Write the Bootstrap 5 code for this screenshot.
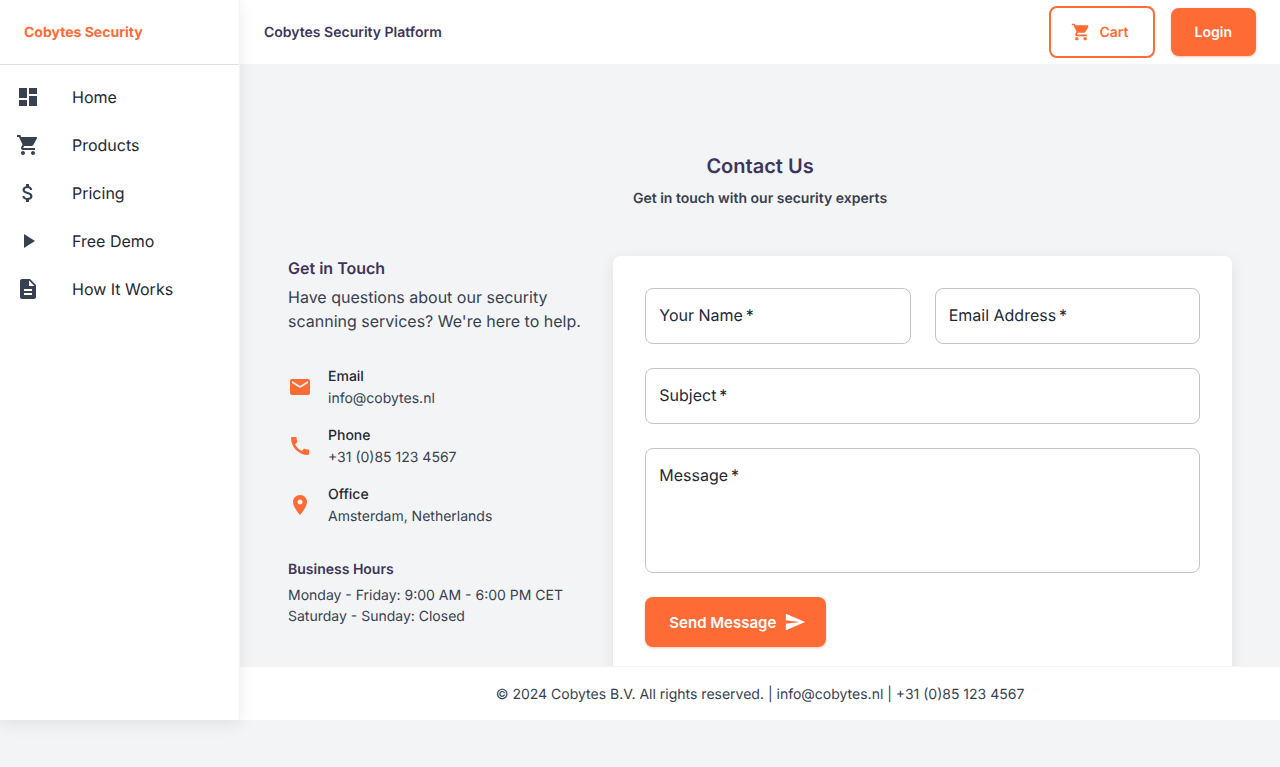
<!DOCTYPE html>
<html lang="en">
<head>
<meta charset="utf-8">
<meta name="viewport" content="width=device-width, initial-scale=1">
<title>Cobytes Security Platform</title>
<link href="https://cdn.jsdelivr.net/npm/bootstrap@5.3.0/dist/css/bootstrap.min.css" rel="stylesheet">
<style>
  :root { --brand: #ff6b35; --ink: #1f2937; --slate: #374151; --plum: #3d355c; }
  body { font-family: Inter, "Liberation Sans", sans-serif; background: #f3f4f6; color: var(--ink); text-rendering: geometricPrecision; min-height: 100vh; }
  .shell { height: 720px; }
  .sidebar { width: 240px; height: 720px; border-right: 1px solid #f3f4f6; box-shadow: 0 4px 16px rgba(0,0,0,.08); z-index: 2; }
  .brand { height: 65px; border-bottom: 1px solid #e0e0e0; color: var(--brand); font-size: 14px; font-weight: 700; padding-top: 1px; }
  .side-nav .nav-link { height: 48px; color: var(--ink); gap: 32px; }
  .side-nav svg { color: var(--slate); }
  svg { fill: currentColor; flex: none; display: block; }
  .icon-start { margin: 0 0 2px -4px; }
  .icon-end { margin: 0 -4px 2px 0; }
  .topbar { height: 64px; }
  .topbar-title { font-size: 14px; font-weight: 600; line-height: 22px; padding-top: 2px; color: var(--plum); }
  .btn-brand, .btn-ghost { font-size: 14px; font-weight: 600; line-height: 1.75; padding: 13px 24px 11px; border-radius: 8px; }
  .btn-brand { background: var(--brand); color: #fff; border: 0; box-shadow: 0 1px 3px rgba(255,107,53,.3), 0 1px 2px rgba(0,0,0,.06); }
  .btn-ghost { color: var(--brand); border: 2px solid var(--brand); }
  .btn-send { font-size: 15px; }
  .page-main { min-height: 0; padding: 88px 48px 0; }
  .page-title { font-size: 20px; font-weight: 600; line-height: 28px; color: var(--plum); }
  .page-sub { font-size: 14px; font-weight: 600; line-height: 22px; color: var(--slate); margin: 8px 0 46px; }
  .contact-row { --bs-gutter-x: 32px; }
  .section-title { font-size: 16px; font-weight: 600; line-height: 24px; color: var(--plum); margin-bottom: 5px; }
  .intro { color: var(--slate); margin-bottom: 32px; }
  .contact-list { font-size: 14px; line-height: 21.5px; margin-bottom: 33px; }
  .contact-list svg { color: var(--brand); }
  .contact-text { margin: 1px 0 -1px; }
  .contact-list .value, .hours { color: var(--slate); }
  .hours { font-size: 14px; line-height: 21px; }
  .hours-title { font-size: 14px; font-weight: 600; line-height: 21px; color: var(--plum); margin-bottom: 5px; }
  .form-card { border-radius: 8px; padding: 32px; height: 460px; box-shadow: 0 4px 16px rgba(0,0,0,.08); }
  .field .form-control { height: 56px; border: 1px solid #c4c4c4; border-radius: 8px; resize: none; }
  .field textarea.form-control { height: 125px; display: block; }
  .field label { top: 16px; left: 14px; line-height: 23px; }
  .page-foot { height: 54px; border-top: 1px solid #f3f4f6; padding-top: 2px; font-size: 14px; color: var(--slate); }
</style>
</head>
<body>
<div class="shell d-flex">
  <aside class="sidebar bg-white position-relative flex-shrink-0">
    <div class="brand d-flex align-items-center px-4">Cobytes Security</div>
    <nav class="side-nav nav flex-column py-2">
      <a class="nav-link d-flex align-items-center px-3 py-0" href="#"><svg width="24" height="24" viewBox="0 0 24 24"><path d="M3 13h8V3H3v10zm0 8h8v-6H3v6zm10 0h8V11h-8v10zm0-18v6h8V3h-8z"/></svg>Home</a>
      <a class="nav-link d-flex align-items-center px-3 py-0" href="#"><svg width="24" height="24" viewBox="0 0 24 24"><path d="M7 18c-1.100 0-1.990.9-1.990 2S5.900 22 7 22s2-.9 2-2-.9-2-2-2zM1 2v2h2l3.600 7.590-1.350 2.450c-.16.28-.25.61-.25.96 0 1.100.9 2 2 2h12v-2H7.420c-.14 0-.25-.11-.25-.25l.03-.12.9-1.630h7.450c.75 0 1.410-.41 1.750-1.030l3.580-6.490c.08-.14.12-.31.12-.48 0-.55-.45-1-1-1H5.210l-.94-2H1zm16 16c-1.100 0-1.990.9-1.990 2s.89 2 1.990 2 2-.9 2-2-.9-2-2-2z"/></svg>Products</a>
      <a class="nav-link d-flex align-items-center px-3 py-0" href="#"><svg width="24" height="24" viewBox="0 0 24 24"><path d="M11.800 10.900c-2.270-.59-3-1.200-3-2.150 0-1.090 1.010-1.850 2.700-1.850 1.780 0 2.440.85 2.500 2.100h2.210c-.07-1.720-1.120-3.300-3.210-3.810V3h-3v2.160c-1.940.42-3.500 1.680-3.500 3.610 0 2.310 1.910 3.460 4.700 4.130 2.500.6 3 1.480 3 2.410 0 .69-.49 1.790-2.700 1.790-2.060 0-2.870-.92-2.980-2.100h-2.200c.12 2.190 1.760 3.420 3.680 3.830V21h3v-2.150c1.950-.37 3.500-1.500 3.500-3.550 0-2.840-2.430-3.810-4.700-4.400z"/></svg>Pricing</a>
      <a class="nav-link d-flex align-items-center px-3 py-0" href="#"><svg width="24" height="24" viewBox="0 0 24 24"><path d="M8 5v14l11-7z"/></svg>Free Demo</a>
      <a class="nav-link d-flex align-items-center px-3 py-0" href="#"><svg width="24" height="24" viewBox="0 0 24 24"><path d="M14 2H6c-1.100 0-1.990.9-1.990 2L4 20c0 1.100.89 2 1.990 2H18c1.100 0 2-.9 2-2V8l-6-6zm2 16H8v-2h8v2zm0-4H8v-2h8v2zm-3-5V3.500L18.500 9H13z"/></svg>How It Works</a>
    </nav>
  </aside>

  <div class="d-flex flex-column flex-grow-1">
    <header class="topbar bg-white d-flex align-items-center justify-content-between px-4 flex-shrink-0">
      <div class="topbar-title">Cobytes Security Platform</div>
      <div class="d-flex align-items-center gap-3">
        <a class="btn btn-ghost d-flex align-items-center gap-2" href="#"><svg class="icon-start" width="20" height="20" viewBox="0 0 24 24"><path d="M7 18c-1.100 0-1.990.9-1.990 2S5.900 22 7 22s2-.9 2-2-.9-2-2-2zM1 2v2h2l3.600 7.590-1.350 2.450c-.16.28-.25.61-.25.96 0 1.100.9 2 2 2h12v-2H7.420c-.14 0-.25-.11-.25-.25l.03-.12.9-1.630h7.450c.75 0 1.410-.41 1.750-1.030l3.580-6.490c.08-.14.12-.31.12-.48 0-.55-.45-1-1-1H5.210l-.94-2H1zm16 16c-1.100 0-1.990.9-1.990 2s.89 2 1.990 2 2-.9 2-2-.9-2-2-2z"/></svg>Cart</a>
        <a class="btn btn-brand" href="#">Login</a>
      </div>
    </header>

    <main class="page-main flex-grow-1 overflow-hidden">
      <div class="text-center">
        <h1 class="page-title mb-0">Contact Us</h1>
        <p class="page-sub">Get in touch with our security experts</p>
      </div>
      <div class="row contact-row">
        <section class="col-4">
          <h2 class="section-title">Get in Touch</h2>
          <p class="intro">Have questions about our security scanning services? We're here to help.</p>
          <div class="contact-list d-flex flex-column gap-3">
            <div class="d-flex align-items-center gap-3">
              <svg width="24" height="24" viewBox="0 0 24 24"><path d="M20 4H4c-1.100 0-1.990.9-1.990 2L2 18c0 1.100.9 2 2 2h16c1.100 0 2-.9 2-2V6c0-1.100-.9-2-2-2zm0 4-8 5-8-5V6l8 5 8-5v2z"/></svg>
              <div class="contact-text"><div class="fw-medium">Email</div><div class="value">info@cobytes.nl</div></div>
            </div>
            <div class="d-flex align-items-center gap-3">
              <svg width="24" height="24" viewBox="0 0 24 24"><path d="M20.010 15.380c-1.230 0-2.420-.2-3.530-.56-.35-.12-.74-.03-1.010.24l-1.570 1.970c-2.830-1.350-5.480-3.900-6.890-6.830l1.950-1.660c.27-.28.35-.67.24-1.020-.37-1.110-.56-2.300-.56-3.530 0-.54-.45-.99-.99-.99H4.190C3.650 3 3 3.240 3 3.990 3 13.280 10.730 21 20.010 21c.71 0 .99-.63.99-1.180v-3.450c0-.54-.45-.99-.99-.99z"/></svg>
              <div class="contact-text"><div class="fw-medium">Phone</div><div class="value">+31 (0)85 123 4567</div></div>
            </div>
            <div class="d-flex align-items-center gap-3">
              <svg width="24" height="24" viewBox="0 0 24 24"><path d="M12 2C8.130 2 5 5.130 5 9c0 5.250 7 13 7 13s7-7.750 7-13c0-3.870-3.130-7-7-7zm0 9.500c-1.380 0-2.500-1.120-2.500-2.500s1.120-2.500 2.500-2.500 2.500 1.120 2.500 2.500-1.120 2.500-2.500 2.500z"/></svg>
              <div class="contact-text"><div class="fw-medium">Office</div><div class="value">Amsterdam, Netherlands</div></div>
            </div>
          </div>
          <h3 class="hours-title">Business Hours</h3>
          <p class="hours mb-0">Monday - Friday: 9:00 AM - 6:00 PM CET<br>Saturday - Sunday: Closed</p>
        </section>
        <section class="col-8">
          <form class="form-card bg-white">
            <div class="row g-4">
              <div class="col-6"><div class="field position-relative"><input class="form-control" id="name" type="text"><label class="position-absolute" for="name">Your Name&thinsp;*</label></div></div>
              <div class="col-6"><div class="field position-relative"><input class="form-control" id="email" type="email"><label class="position-absolute" for="email">Email Address&thinsp;*</label></div></div>
              <div class="col-12"><div class="field position-relative"><input class="form-control" id="subject" type="text"><label class="position-absolute" for="subject">Subject&thinsp;*</label></div></div>
              <div class="col-12"><div class="field position-relative"><textarea class="form-control" id="message"></textarea><label class="position-absolute" for="message">Message&thinsp;*</label></div></div>
              <div class="col-12"><button class="btn btn-brand btn-send d-inline-flex align-items-center gap-2" type="button">Send Message<svg class="icon-end" width="22" height="22" viewBox="0 0 24 24"><path d="M2.010 21 23 12 2.010 3 2 10l15 2-15 2z"/></svg></button></div>
            </div>
          </form>
        </section>
      </div>
    </main>

    <footer class="page-foot bg-white d-flex align-items-center justify-content-center flex-shrink-0">© 2024 Cobytes B.V. All rights reserved. | info@cobytes.nl | +31 (0)85 123 4567</footer>
  </div>
</div>
<script src="https://cdn.jsdelivr.net/npm/bootstrap@5.3.0/dist/js/bootstrap.bundle.min.js"></script>
</body>
</html>
